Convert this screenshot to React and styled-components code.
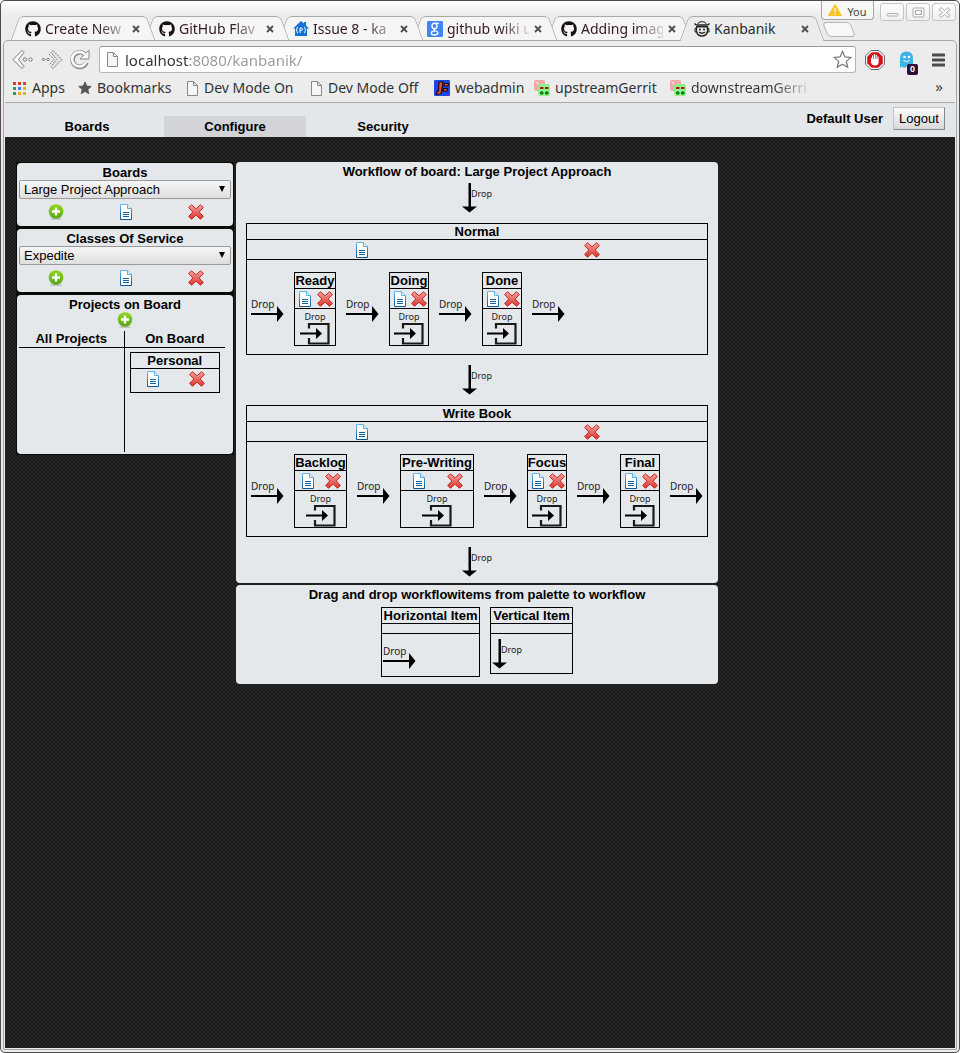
import React from "react";
import styled, { createGlobalStyle, css } from "styled-components";
import { FaGithub } from "react-icons/fa";

const Global = createGlobalStyle`
  *, *::before, *::after { box-sizing: border-box; }
  body { margin: 0; background: #fff; font-family: "Liberation Sans", Arial, sans-serif; font-size: 13px; line-height: 16px; color: #000; }
  button, input, select { font: inherit; color: inherit; margin: 0; }
  button { padding: 0; background: none; border: 0; }
  svg { display: block; flex: none; }
`;

const uiFont = css`font-family: "Noto Sans", "Open Sans", sans-serif;`;

/* ---------- browser window ---------- */

const Window = styled.div`
  position: relative;
  display: flex;
  flex-direction: column;
  min-height: 100vh;
  padding: 0 2px 2px;
  border: 1px solid #4f4b4e;
  border-radius: 5px;
  background: linear-gradient(#fdfdfd, #ebebeb 16px, #ebebeb);
`;

const TabStrip = styled.div`
  display: flex;
  align-items: flex-end;
  height: 39px;
  padding-left: 8px;
  ${uiFont}
  font-size: 14px;
`;

const TabBox = styled.div`
  position: relative;
  z-index: ${(p) => p.$level};
  display: flex;
  align-items: center;
  gap: 4px;
  flex: 0 1 144px;
  min-width: 0;
  height: ${(p) => (p.$active ? 25 : 24)}px;
  padding: ${(p) => (p.$active ? "1px 14px 0" : "2px 14px 0")};
  margin-bottom: ${(p) => (p.$active ? -1 : 0)}px;
  margin-left: ${(p) => (p.$active ? -11 : -10)}px;
  color: ${(p) => (p.$active ? "#2b2f30" : "#34191c")};

  &:first-child { margin-left: 0; }

  &::before,
  &::after {
    content: "";
    position: absolute;
    z-index: -1;
    top: 0;
    bottom: 0;
    border: 1px solid #a9a9a9;
    border-bottom: 0;
    background: ${(p) => (p.$active ? "#ececec" : "#f6f5f5")};
  }
  &::before {
    left: 4px;
    right: 50%;
    border-right: 0;
    border-top-left-radius: 5px;
    transform: skewX(-20deg);
  }
  &::after {
    left: 40%;
    right: 4px;
    border-left: 0;
    border-top-right-radius: 5px;
    transform: skewX(20deg);
  }
`;

const TabLabel = styled.span`
  flex: 1;
  min-width: 0;
  white-space: nowrap;
  line-height: 20px;
  ${(p) => p.$fade && css`
    color: transparent;
    background: linear-gradient(to right, #34191c 65%, #d8d2d2);
    background-clip: text;
  `}
`;

const CloseButton = styled.button`
  width: 10px;
  height: 10px;
`;

const NewTab = styled.button`
  width: 28px;
  height: 15px;
  margin: 0 0 3px 1px;
  border: 1px solid #b5b5b5;
  border-radius: 4px;
  background: #f7f7f7;
  transform: skewX(22deg);
`;

const WindowControls = styled.div`
  position: absolute;
  top: 0;
  right: 3px;
  display: flex;
  gap: 2px;
`;

const ProfileButton = styled.button`
  display: flex;
  align-items: center;
  justify-content: center;
  gap: 5px;
  width: 53px;
  height: 19px;
  padding-top: 3px;
  margin-right: 4px;
  border: 1px solid #a5a5a5;
  border-top: 0;
  border-radius: 0 0 4px 4px;
  background: #f6f6f6;
  ${uiFont}
  font-size: 11px;
  line-height: 14px;
  color: #444;
  svg { margin-top: -3px; }
`;

const ControlButton = styled.button`
  display: grid;
  place-items: center;
  width: 24px;
  height: 18px;
  margin-top: 2px;
  border: 1px solid #c4c4c4;
  border-radius: 3px;
  background: linear-gradient(#fdfdfd, #f0f0f0);
`;

const Shell = styled.div`
  display: flex;
  flex: 1;
  flex-direction: column;
  padding: 0 1px 1px;
  border: 1px solid #a8a4a6;
  border-radius: 5px 5px 0 0;
  background: #ececec;
`;

const Toolbar = styled.div`
  display: flex;
  align-items: center;
  padding: 5px 10px 1px 7px;
`;

const ToolButton = styled.button`
  position: relative;
  display: grid;
  place-items: center;
  flex: none;
  width: ${(p) => p.$w || 22}px;
  height: 22px;
  margin-right: ${(p) => p.$after || 0}px;
`;

const AddressBar = styled.div`
  display: flex;
  align-items: center;
  flex: 1;
  gap: 6px;
  min-width: 0;
  height: 27px;
  margin-right: 9px;
  padding: 0 3px 0 6px;
  border: 1px solid #b4b4b4;
  border-top-color: #999;
  border-radius: 3px;
  background: #fff;
`;

const AddressInput = styled.input`
  flex: 1;
  min-width: 0;
  height: 23px;
  padding: 0;
  border: 0;
  outline: 0;
  ${uiFont}
  font-size: 15px;
  background: linear-gradient(to right, #2e3436 65px, #999 65px);
  background-clip: text;
  -webkit-text-fill-color: transparent;
`;

const Badge = styled.span`
  position: absolute;
  right: -1px;
  bottom: -4px;
  width: 11px;
  height: 11px;
  border-radius: 2px;
  background: #2d1133;
  color: #fff;
  font-size: 9px;
  font-weight: bold;
  line-height: 11px;
  text-align: center;
`;

const BookmarkBar = styled.nav`
  display: flex;
  align-items: center;
  height: 29px;
  padding: 0 12px 0 7px;
  border-bottom: 1px solid #aaa;
  ${uiFont}
  font-size: 14px;
`;

const Bookmark = styled.a`
  display: flex;
  align-items: center;
  gap: 5px;
  flex: 0 1 ${(p) => p.$w}px;
  min-width: 0;
  white-space: nowrap;
  line-height: 20px;
  text-decoration: none;
  color: #2e3436;
`;

const BookmarkLabel = styled.span`
  ${(p) => p.$fade && css`
    color: transparent;
    background: linear-gradient(to right, #2e3436 70%, #d0d0d0);
    background-clip: text;
  `}
`;

const MoreButton = styled.button`
  margin-left: auto;
  font-size: 15px;
  line-height: 16px;
  padding-bottom: 4px;
  color: #444;
`;

/* ---------- kanbanik page ---------- */

const Page = styled.div`
  display: flex;
  flex: 1;
  flex-direction: column;
  background: conic-gradient(#262626 25%, #1a1a1a 0 50%, #262626 0 75%, #1a1a1a 0) 0 0 / 4px 4px;
`;

const Header = styled.header`
  display: flex;
  justify-content: space-between;
  height: 34px;
  padding: 0 10px 0 11px;
  background: #e4e7ea;
  font-weight: bold;
`;

const Nav = styled.nav`
  display: flex;
  align-items: flex-end;
  gap: 6px;
`;

const NavLink = styled.a`
  width: 142px;
  height: 21px;
  border-radius: 3px 3px 0 0;
  background: ${(p) => (p.$active ? "#d2d4d7" : "transparent")};
  color: #000;
  line-height: 22px;
  text-align: center;
  text-decoration: none;
`;

const Account = styled.div`
  display: flex;
  align-items: center;
  gap: 10px;
  padding-bottom: 3px;
`;

const LogoutButton = styled.button`
  width: 52px;
  height: 23px;
  border: 1px solid #a3a3a3;
  border-color: #c4c4c4 #888 #888 #c4c4c4;
  background: linear-gradient(#fbfbfb, #d9d9d9);
  font-weight: normal;
`;

const Workspace = styled.main`
  display: flex;
  align-items: flex-start;
  gap: 2px;
  padding: 25px 11px;
`;

const Sidebar = styled.aside`
  display: flex;
  flex: none;
  flex-direction: column;
  gap: 3px;
  width: 218px;
  padding: 1px;
  background: #090c09;
`;

const Content = styled.div`
  display: flex;
  flex: 0 1 482px;
  flex-direction: column;
  gap: 2px;
`;

const Panel = styled.section`
  padding: ${(p) => p.$pad || "1px 2px 2px"};
  border-radius: 4px;
  background: #e4e8eb;
`;

const PanelTitle = styled.h2`
  height: 16px;
  margin: 0;
  font-size: 13px;
  line-height: 18px;
  text-align: center;
`;

const SelectWrap = styled.label`
  position: relative;
  display: block;
  &::after {
    content: "";
    position: absolute;
    top: 6px;
    right: 6px;
    border: 3px solid transparent;
    border-top: 6px solid #000;
    border-bottom: 0;
    pointer-events: none;
  }
`;

const Select = styled.select`
  appearance: none;
  display: block;
  width: 100%;
  height: 19px;
  padding: 0 4px;
  border: 1px solid #999;
  border-radius: 2px;
  background: linear-gradient(#f6f6f6, #dedede);
  line-height: 16px;
`;

const Actions = styled.div`
  display: grid;
  grid-auto-flow: column;
  grid-auto-columns: 1fr;
  justify-items: center;
  align-items: center;
  height: ${(p) => p.$h}px;
  padding-left: ${(p) => p.$indent || 0}px;
`;

const IconButton = styled.button`
  display: block;
  width: 16px;
  height: 16px;
`;

const CenterRow = styled.div`
  display: flex;
  justify-content: center;
  padding-bottom: 3px;
`;

const ProjectTable = styled.table`
  width: 206px;
  border-collapse: collapse;
  table-layout: fixed;
  th { height: 16px; padding: 0; border-bottom: 1px solid #000; }
  td { height: 104px; padding: 4px 5px; vertical-align: top; }
  th:first-child, td:first-child { width: 105px; border-right: 1px solid #000; }
`;

const Card = styled.div`
  width: ${(p) => (p.$w ? p.$w + "px" : "auto")};
  min-height: ${(p) => p.$h || 0}px;
  border: 1px solid #000;
`;

const CardTitle = styled.h3`
  display: flex;
  justify-content: center;
  height: 16px;
  margin: 0;
  border-bottom: 1px solid #000;
  font-size: 13px;
  line-height: 16px;
  white-space: nowrap;
`;

const CardTools = styled.div`
  height: ${(p) => p.$h || 20}px;
  padding-top: ${(p) => (p.$h ? 0 : 1)}px;
  border-bottom: 1px solid #000;
`;

const Flow = styled.div`
  display: flex;
  flex-direction: column;
  gap: 10px;
  padding: 4px 10px 6px;
`;

const Lane = styled.div`
  display: flex;
  align-items: center;
  gap: 10px;
  padding: 12px 4px 8px;
`;

const DropLabel = styled.span`
  ${uiFont}
  font-size: ${(p) => (p.$small ? 9 : 10)}px;
  line-height: 12px;
  color: #222;
`;

const RightDrop = styled.div`
  display: flex;
  flex: none;
  flex-direction: column;
  width: 33px;
  padding-top: 2px;
  svg { margin-top: -4px; }
`;

const DownDrop = styled.div`
  display: flex;
  justify-content: center;
  height: 30px;
  span { margin: 5px 0 0 -6px; }
`;

const InsideDrop = styled.div`
  display: flex;
  flex-direction: column;
  align-items: center;
  padding-top: 2px;
`;

const PaletteRow = styled.div`
  display: flex;
  align-items: flex-start;
  justify-content: center;
  gap: 10px;
  padding-top: 5px;
`;

const PaletteSlot = styled.div`
  display: flex;
  padding: ${(p) => p.$pad};
`;

/* ---------- icons ---------- */

const AddIcon = () => (
  <svg width="16" height="16" viewBox="0 0 16 16">
    <defs><linearGradient id="add" x2="0" y2="1"><stop stopColor="#93d81d" /><stop offset="1" stopColor="#58a618" /></linearGradient></defs>
    <ellipse cx="8" cy="15" rx="6" ry="1" fill="#bfc3c5" />
    <circle cx="8" cy="7.5" r="7.3" fill="url(#add)" />
    <path d="M8 3.5v8M4 7.5h8" stroke="#fff" strokeWidth="2.4" />
  </svg>
);

const DocIcon = () => (
  <svg width="16" height="16" viewBox="0 0 16 16">
    <defs><linearGradient id="doc" x2="0" y2="1"><stop stopColor="#63b8ea" /><stop offset="1" stopColor="#0b5797" /></linearGradient></defs>
    <path d="M2.5.5h7l4 4v11h-11z" fill="#fff" stroke="url(#doc)" />
    <path d="M9.5.5v4h4" fill="#d9effb" stroke="#5fb0e2" />
    <path d="M5 8.5h6M5 10.5h6M5 12.5h6" stroke="#14609f" />
  </svg>
);

const DeleteIcon = () => (
  <svg width="16" height="16" viewBox="0 0 16 16">
    <defs><linearGradient id="del" x2="0" y2="1"><stop stopColor="#f4a09c" /><stop offset="1" stopColor="#d8352f" /></linearGradient></defs>
    <path d="M3.5.7 8 4.8 12.5.7 15.4 3.5 11.2 8l4.2 4.4-2.9 2.9L8 11.2l-4.5 4.1-2.9-2.9L4.8 8 .6 3.5z" fill="url(#del)" stroke="#cc2a26" strokeLinejoin="round" />
  </svg>
);

const RightArrow = () => (
  <svg width="33" height="16" viewBox="0 0 33 16"><path d="M0 7h26V0l6.500 8-6.500 8V9H0z" fill="#000" /></svg>
);

const DownArrow = () => (
  <svg width="15" height="30" viewBox="0 0 15 30"><path d="M6.500 0h2.500v23.500H15l-7.500 6L0 23.500h6.500z" fill="#000" /></svg>
);

const InsideArrow = () => (
  <svg width="30" height="22" viewBox="0 0 30 22">
    <path d="M9 5.500V1h19.500v19.500H9V15" fill="none" stroke="#1a1a1a" strokeWidth="2.200" />
    <path d="M0 9.500h16V5l6 5.500-6 5.500v-4.500H0z" fill="#000" />
  </svg>
);

const PageIcon = () => (
  <svg width="13" height="15" viewBox="0 0 13 15"><path d="M1.500.5h6l4 4v10h-10zM7.500.5v4h4" fill="#f5f5f5" stroke="#888" /></svg>
);

const CloseIcon = () => (
  <svg width="10" height="10" viewBox="0 0 10 10"><path d="m2 2 6 6M8 2 2 8" stroke="#4c4c4c" strokeWidth="1.800" /></svg>
);

const GitIcon = () => <FaGithub size={16} color="#181016" />;

const HouseIcon = () => (
  <svg width="16" height="16" viewBox="0 0 16 16">
    <path d="M8 0 0 7.500h2V15h12V7.500h2l-3-3V1h-2v1.500z" fill="#1273d6" />
    <path d="M5 6Q4 6 4 7.500T3 9q1 0 1 1.500T5 12M11 6q1 0 1 1.500T13 9q-1 0-1 1.500T11 12M7 12V7h1.200q1.300 0 1.300 1.200T8.200 9.500H7" fill="none" stroke="#fff" />
  </svg>
);

const GoogleIcon = () => (
  <svg width="16" height="16" viewBox="0 0 16 16">
    <rect width="16" height="16" rx="1" fill="#4285f4" />
    <ellipse cx="7.500" cy="5" rx="2.500" ry="2.700" fill="none" stroke="#fff" strokeWidth="1.400" />
    <path d="M8 2.300h4M8 7.700q-2 1 0 1.800 3 1 3 2.500T7.700 14Q4.300 14 4.300 12T8 10" fill="none" stroke="#fff" strokeWidth="1.300" />
  </svg>
);

const FaceIcon = () => (
  <svg width="16" height="16" viewBox="0 0 16 16" fill="none" stroke="#222">
    <path d="M3.500 3.500Q4 .6 8 .6t4.500 2.900" />
    <path d="M.5 2.500Q2 4.500 4 4h8q2 .5 3.500-1.500M2 5.800h12" strokeWidth="1.400" />
    <path d="M2.500 5.500v5Q3.500 15 8 15t5.500-4.500v-5" strokeWidth="1.400" />
    <path d="M2.500 7.500H1V11h1.500M13.500 7.500H15V11h-1.500" />
    <path d="M5 8.500h2M9 8.500h2M5 11q3 2.500 6 0" strokeWidth="1.400" />
  </svg>
);

const BackIcon = () => (
  <svg width="22" height="22" viewBox="0 0 22 22" fill="#fafafa" stroke="#777">
    <path d="M10 1.500 1 10.500l9 9 2-2-5.500-7 5.500-7z" /><circle cx="13" cy="10.500" r="1.700" /><circle cx="18.500" cy="10.500" r="1.700" />
  </svg>
);

const ForwardIcon = () => (
  <svg width="22" height="22" viewBox="0 0 22 22" fill="#e0e0e0" stroke="#777">
    <path d="m12 1.500 9 9-9 9-2-2 5.500-7-5.500-7z" strokeDasharray="2 1" /><path d="m8 5 5 5.500L8 16" fill="none" strokeDasharray="2 1" /><path d="m1 10.500 1.500-1.500L4 10.500 2.500 12zM5.500 10.500 7 9l1.500 1.500L7 12z" />
  </svg>
);

const ReloadIcon = () => (
  <svg width="22" height="22" viewBox="0 0 22 22" fill="none">
    <path d="M17.500 13.500A7.300 7.300 0 1 1 15.500 5" stroke="#888" strokeWidth="4.600" />
    <path d="M20 1v9h-9z" fill="#fafafa" stroke="#888" />
    <path d="M17 13.300A7.300 7.300 0 1 1 16 5.500" stroke="#fafafa" strokeWidth="2.600" />
  </svg>
);

const StarIcon = ({ size = 19, fill = "#fff", stroke = "#777" }) => (
  <svg width={size} height={size} viewBox="0 0 19 19"><path d="m9.500 1.300 2.400 5.600 6 .5-4.600 4 1.400 5.900-5.200-3.100-5.200 3.100 1.400-5.900-4.600-4 6-.5z" fill={fill} stroke={stroke} strokeWidth="1.200" /></svg>
);

const BlockIcon = () => (
  <svg width="20" height="20" viewBox="0 0 20 20">
    <path d="M6 .5h8L19.500 6v8L14 19.500H6L.5 14V6z" fill="#fff" stroke="#666" />
    <path d="M6.700 2.200h6.600l4.500 4.500v6.600l-4.500 4.500H6.700l-4.500-4.500V6.700z" fill="#d51217" />
    <path d="M6 8q1-1 1 1V5.500h1.200V9h.6V4.200H10V9h.6V4.800h1.200V9h.6V6.500h1.200V12q0 3.500-3.600 3.500T6 12z" fill="#fff" />
  </svg>
);

const GhostIcon = () => (
  <svg width="15" height="18" viewBox="0 0 15 18">
    <path d="M1 17V7q0-6.500 6.500-6.500T14 7v10l-2-1.500L9.500 17l-2-1.500-2 1.500L3 15.500z" fill="#3fb2e6" />
    <circle cx="5.500" cy="6" r="1.300" fill="#fff" /><circle cx="10" cy="6" r="1.300" fill="#fff" /><path d="M4.500 9.500q3 2.500 6 0" stroke="#fff" fill="none" />
  </svg>
);

const MenuIcon = () => (
  <svg width="13" height="14" viewBox="0 0 13 14"><path d="M1 2h11M1 7h11M1 12h11" stroke="#4a4a4a" strokeWidth="3" strokeLinecap="round" /></svg>
);

const appColors = ["#e33b2e", "#e33b2e", "#e33b2e", "#2a9d5c", "#3b7ded", "#f1ae14", "#2a9d5c", "#f1ae14", "#f1ae14"];
const AppsIcon = () => (
  <svg width="15" height="15" viewBox="0 0 15 15">
    {appColors.map((c, i) => <rect key={i} x={1 + (i % 3) * 5} y={1 + Math.floor(i / 3) * 5} width="3" height="3" fill={c} />)}
  </svg>
);

const WebadminIcon = () => (
  <svg width="16" height="16" viewBox="0 0 16 16">
    <rect width="16" height="16" rx="1" fill="#1b46e0" />
    <path d="M5 2h4L7.500 12q-.5 2.500-5 2.300L3 11.500l1.500-.5zM10.500 3.500h4L14 6h-4zM9.500 8.500h4L13 11H9z" fill="#f2502b" stroke="#190a1c" strokeWidth="1.200" />
  </svg>
);

const GerritIcon = () => (
  <svg width="16" height="16" viewBox="0 0 16 16">
    <rect width="11" height="11" rx="2" fill="#f7a9a9" /><path d="M2 3h3M3.500 1.500v3" stroke="#fcd9d9" />
    <rect x="4" y="4" width="12" height="12" rx="2" fill="#8df48a" />
    <path d="M6 8h3.500M11 8h3.500" stroke="#b5101a" strokeWidth="2" />
    <path d="M6 13h3.500M11 13h3.500M7.700 11.200v3.600M12.800 11.200v3.600" stroke="#127a17" strokeWidth="1.800" />
  </svg>
);

const WarningIcon = () => (
  <svg width="14" height="12" viewBox="0 0 14 12"><path d="M7 .5 13.500 11.500H.5z" fill="#f9c423" stroke="#f9c423" strokeLinejoin="round" /><path d="M7 4v4M7 9v1.500" stroke="#fff" strokeWidth="1.300" /></svg>
);

const controlShapes = {
  Minimize: <rect x="2" y="7.500" width="11" height="2.500" rx="1" />,
  Maximize: <><rect x="2" y="2" width="11" height="9" rx="1" /><rect x="4.500" y="4.500" width="6" height="4" /></>,
  Close: <path d="m2 3.500 2-2 3.500 3 3.500-3 2 2-3.500 3 3.500 3-2 2-3.500-3-3.500 3-2-2 3.500-3z" />,
};

/* ---------- pieces ---------- */

const tabs = [
  ["Create New", GitIcon],
  ["GitHub Flav", GitIcon],
  ["Issue 8 - ka", HouseIcon],
  ["github wiki u", GoogleIcon],
  ["Adding imag", GitIcon],
  ["Kanbanik", FaceIcon],
];

const bookmarks = [
  ["Apps", AppsIcon, 66],
  ["Bookmarks", () => <StarIcon size={14} fill="#555" stroke="#555" />, 108],
  ["Dev Mode On", PageIcon, 124],
  ["Dev Mode Off", PageIcon, 124],
  ["webadmin", WebadminIcon, 100],
  ["upstreamGerrit", GerritIcon, 136],
  ["downstreamGerri", GerritIcon, 139],
];

const EditButton = () => <IconButton aria-label="Edit"><DocIcon /></IconButton>;
const DeleteButton = () => <IconButton aria-label="Delete"><DeleteIcon /></IconButton>;
const AddButton = () => <IconButton aria-label="Add"><AddIcon /></IconButton>;

const DropRight = () => <RightDrop><DropLabel>Drop</DropLabel><RightArrow /></RightDrop>;
const DropDown = () => <DownDrop><DownArrow /><DropLabel $small>Drop</DropLabel></DownDrop>;

const SelectPanel = ({ title, value }) => (
  <Panel>
    <PanelTitle>{title}</PanelTitle>
    <SelectWrap>
      <Select aria-label={title} defaultValue={value}><option>{value}</option></Select>
    </SelectWrap>
    <Actions $h={25} $indent={2}><AddButton /><EditButton /><DeleteButton /></Actions>
  </Panel>
);

const WorkflowItem = ({ title, width }) => (
  <Card $w={width}>
    <CardTitle>{title}</CardTitle>
    <CardTools><Actions $h={18}><EditButton /><DeleteButton /></Actions></CardTools>
    <InsideDrop><DropLabel $small>Drop</DropLabel><InsideArrow /></InsideDrop>
  </Card>
);

const Group = ({ title, items }) => (
  <Card>
    <CardTitle>{title}</CardTitle>
    <CardTools><Actions $h={18}><EditButton /><DeleteButton /></Actions></CardTools>
    <Lane>
      <DropRight />
      {items.map(([name, width]) => (
        <React.Fragment key={name}><WorkflowItem title={name} width={width} /><DropRight /></React.Fragment>
      ))}
    </Lane>
  </Card>
);

const BrowserChrome = () => (
  <>
    <TabStrip>
      {tabs.map(([label, Icon], i) => {
        const active = i === tabs.length - 1;
        return (
          <TabBox key={label} $active={active} $level={active ? 10 : 9 - i}>
            <Icon />
            <TabLabel $fade={!active}>{label}</TabLabel>
            <CloseButton aria-label="Close tab"><CloseIcon /></CloseButton>
          </TabBox>
        );
      })}
      <NewTab aria-label="New tab" />
    </TabStrip>
    <WindowControls>
      <ProfileButton><WarningIcon />You</ProfileButton>
      {Object.entries(controlShapes).map(([name, shape]) => (
        <ControlButton key={name} aria-label={name}>
          <svg width="15" height="13" viewBox="0 0 15 13" fill="#fafafa" stroke="#aaa">{shape}</svg>
        </ControlButton>
      ))}
    </WindowControls>
  </>
);

export default function App() {
  return (
    <>
      <Global />
      <Window>
        <BrowserChrome />
        <Shell>
          <Toolbar>
            <ToolButton aria-label="Back" $after={7}><BackIcon /></ToolButton>
            <ToolButton aria-label="Forward" $after={6}><ForwardIcon /></ToolButton>
            <ToolButton aria-label="Reload" $after={8}><ReloadIcon /></ToolButton>
            <AddressBar>
              <PageIcon />
              <AddressInput aria-label="Address" defaultValue="localhost:8080/kanbanik/" />
              <StarIcon />
            </AddressBar>
            <ToolButton aria-label="Content blocker" $w={20} $after={10}><BlockIcon /></ToolButton>
            <ToolButton aria-label="Trackers" $after={15}><GhostIcon /><Badge>0</Badge></ToolButton>
            <ToolButton aria-label="Menu" $w={13}><MenuIcon /></ToolButton>
          </Toolbar>
          <BookmarkBar>
            {bookmarks.map(([label, Icon, width]) => (
              <Bookmark key={label} href="#" $w={width}>
                <Icon />
                <BookmarkLabel $fade={label.startsWith("down")}>{label}</BookmarkLabel>
              </Bookmark>
            ))}
            <MoreButton aria-label="More bookmarks">»</MoreButton>
          </BookmarkBar>

          <Page>
            <Header>
              <Nav>
                <NavLink href="#">Boards</NavLink>
                <NavLink href="#" $active>Configure</NavLink>
                <NavLink href="#">Security</NavLink>
              </Nav>
              <Account>
                Default User
                <LogoutButton>Logout</LogoutButton>
              </Account>
            </Header>
            <Workspace>
              <Sidebar>
                <SelectPanel title="Boards" value="Large Project Approach" />
                <SelectPanel title="Classes Of Service" value="Expedite" />
                <Panel>
                  <PanelTitle>Projects on Board</PanelTitle>
                  <CenterRow><AddButton /></CenterRow>
                  <ProjectTable>
                    <thead><tr><th>All Projects</th><th>On Board</th></tr></thead>
                    <tbody>
                      <tr>
                        <td />
                        <td>
                          <Card $h={41}>
                            <CardTitle>Personal</CardTitle>
                            <Actions $h={20}><EditButton /><DeleteButton /></Actions>
                          </Card>
                        </td>
                      </tr>
                    </tbody>
                  </ProjectTable>
                </Panel>
              </Sidebar>
              <Content>
                <Panel $pad="1px 0 0">
                  <PanelTitle>Workflow of board: Large Project Approach</PanelTitle>
                  <Flow>
                    <DropDown />
                    <Group title="Normal" items={[["Ready", 42], ["Doing", 40], ["Done", 40]]} />
                    <DropDown />
                    <Group title="Write Book" items={[["Backlog", 53], ["Pre-Writing", 74], ["Focus", 40], ["Final", 40]]} />
                    <DropDown />
                  </Flow>
                </Panel>
                <Panel $pad="1px 0 7px">
                  <PanelTitle>Drag and drop workflowitems from palette to workflow</PanelTitle>
                  <PaletteRow>
                    <Card $w={99}>
                      <CardTitle>Horizontal Item</CardTitle>
                      <CardTools $h={10} />
                      <PaletteSlot $pad="9px 1px 7px"><DropRight /></PaletteSlot>
                    </Card>
                    <Card $w={83}>
                      <CardTitle>Vertical Item</CardTitle>
                      <CardTools $h={10} />
                      <PaletteSlot $pad="5px 1px 4px"><DropDown /></PaletteSlot>
                    </Card>
                  </PaletteRow>
                </Panel>
              </Content>
            </Workspace>
          </Page>
        </Shell>
      </Window>
    </>
  );
}
